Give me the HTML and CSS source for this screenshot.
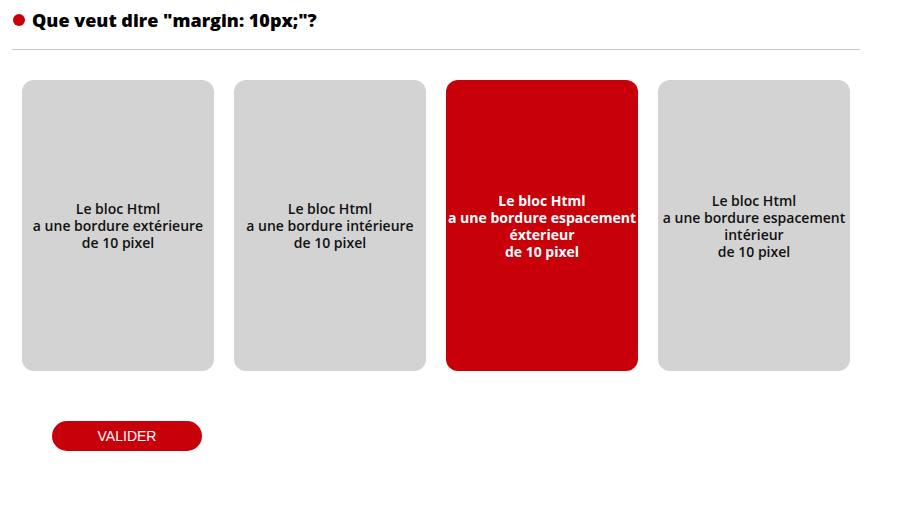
FILE: index.html
```html
<!DOCTYPE html>
<html lang="fr">
<head>
<meta charset="utf-8">
<link rel="stylesheet" href="styles.css">
</head>
<body>
<div class="quiz">
  <h2 class="question"><span class="dot"></span>Que veut dire "margin: 10px;"?</h2>
  <hr class="sep">
  <div class="answers">
    <div class="card"><p>Le bloc Html<br>a une bordure extérieure<br>de 10 pixel</p></div>
    <div class="card"><p>Le bloc Html<br>a une bordure intérieure<br>de 10 pixel</p></div>
    <div class="card selected"><p>Le bloc Html<br>a une bordure espacement<br>éxterieur<br>de 10 pixel</p></div>
    <div class="card"><p>Le bloc Html<br>a une bordure espacement<br>intérieur<br>de 10 pixel</p></div>
  </div>
  <div class="actions"><button class="btn">VALIDER</button></div>
</div>
</body>
</html>
```
FILE: styles.css
```css
html, body { margin: 0; padding: 0; background: #fff; }
body { font-family: "Open Sans", "Liberation Sans", sans-serif; color: #000; }
.quiz { width: 848px; margin-left: 12px; }
.question {
  margin: 0; padding-top: 10px; height: 21px;
  display: flex; align-items: center; gap: 7px;
  font-size: 18px; font-weight: 800; line-height: 21px;
}
.dot { width: 12px; height: 12px; border-radius: 50%; background: #c8000a; margin-left: 1px; margin-top: -2px; flex: none; }
.sep { border: 0; height: 1px; background: #c8c8c8; margin: 18px 0 0; }
.answers { display: flex; gap: 20px; padding: 30px 10px 0; }
.card {
  width: 192px; height: 291px; background: #d3d3d3; border-radius: 12px;
  display: flex; align-items: center; justify-content: center; text-align: center;
}
.card p { margin: 0; font-size: 14px; font-weight: 600; line-height: 17px; color: #111; }
.card.selected { background: #c8000a; }
.card.selected p { color: #fff; font-weight: 700; }
.actions { padding: 50px 0 0 40px; }
.btn {
  display: block;
  width: 150px; height: 30px; border: 0; border-radius: 15px; background: #c8000a;
  color: #fff; font-family: "Liberation Sans", Arial, sans-serif; font-size: 14px; padding: 0;
}
```
